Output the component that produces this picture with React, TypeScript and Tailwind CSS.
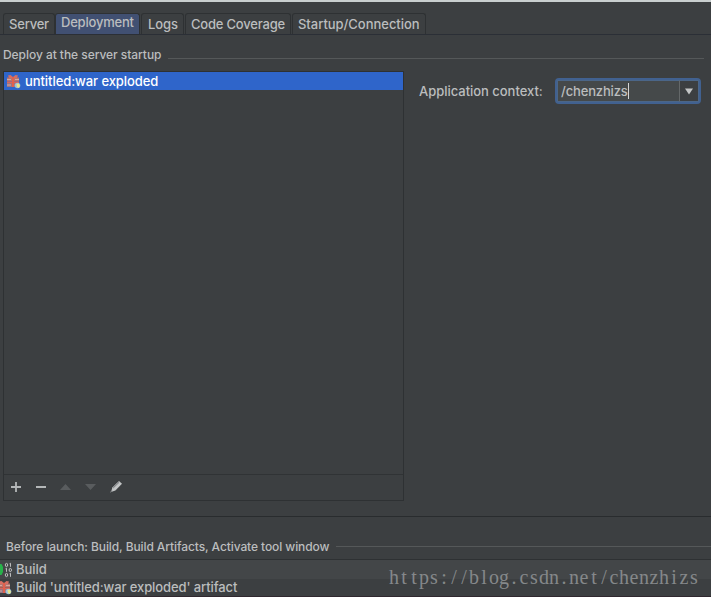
import React from "react";

function ArtifactIcon({ className = "" }: { className?: string }) {
  return (
    <svg width="15" height="15" viewBox="0 0 15 15" className={`shrink-0 ${className}`}>
      <rect x="1" y="3.500" width="5" height="4" fill="#b9756f" />
      <rect x="8" y="3.500" width="5" height="4" fill="#b9756f" />
      <rect x="1" y="9" width="5" height="4" fill="#9c7480" />
      <rect x="8" y="9" width="5" height="4" fill="#9c7480" />
      <path d="M2 1.500l2.500-0.500L7 3l2.500-2 2.500 0.500L11 4H3z" fill="#d86e62" />
      <path d="M1 8.300h12" stroke="#d9665a" strokeWidth="1.500" />
      <path d="M7 3v10" stroke="#e2604c" strokeWidth="2" />
      <path d="M1 5.500h4M9 5.500h4M1 11h4" stroke="#d3aaa2" strokeWidth="1" />
      <circle cx="11.500" cy="11.500" r="2.800" fill="#9cc0d8" />
      <path d="M10.500 10l2-0.500 1.500 2-1 2.500-2-1z" fill="#e8e488" />
    </svg>
  );
}

function BuildIcon() {
  return (
    <svg width="13" height="16" viewBox="0 0 13 16" className="shrink-0">
      <path d="M0 2h1.500L3 5v5l-1.500 3H0z" fill="#27b24a" />
      <g fill="none" stroke="#c9cbcc" strokeWidth="0.9">
        <ellipse cx="6.500" cy="3" rx="1.200" ry="1.600" />
        <path d="M9.500 1.800l1-0.500v3.500M5.500 6.800l1-0.500v3.500M9.500 11.800l1-0.500v3.500" />
        <ellipse cx="10.300" cy="8" rx="1.200" ry="1.600" />
        <ellipse cx="6.500" cy="13" rx="1.200" ry="1.600" />
      </g>
    </svg>
  );
}

function Tab({ label, className }: { label: string; className: string }) {
  return (
    <div className={`h-[21px] shrink-0 whitespace-nowrap rounded-t-[3px] border border-b-0 border-[#2e3133] text-[13px] ${className}`}>
      {label}
    </div>
  );
}

export default function App() {
  return (
    <div className="h-[597px] w-[711px] overflow-hidden bg-[#3c3f41] font-['Inter','Liberation_Sans',sans-serif] text-[13px] font-medium tracking-[-0.07px] text-[#bbbdbe]">
      <div className="h-[2px] bg-[#c9cfcf]" />
      <div className="flex h-[33px] items-start border-b border-[#2b2f36] pl-[3px] pt-[11px]">
        <Tab label="Server" className="w-[52px] pl-[5px] leading-[20px] tracking-[-0.2px]" />
        <Tab label="Deployment" className="w-[85px] bg-[#415072] pl-[5px] leading-[17px] tracking-[-0.2px]" />
        <Tab label="Logs" className="ml-px w-[43px] pl-[6px] leading-[20px]" />
        <Tab label="Code Coverage" className="ml-px w-[106px] pl-[5px] leading-[20px] tracking-[-0.2px]" />
        <Tab label="Startup/Connection" className="ml-px w-[134px] pl-[5px] leading-[20px] tracking-[-0.03px]" />
      </div>

      <div className="flex h-[36px] items-center pl-[3px] pr-[7px] pt-[3px]">
        <span className="w-[165px] whitespace-nowrap text-[12px] tracking-[-0.05px]">Deploy at the server startup</span>
        <div className="mt-[7px] h-px flex-1 bg-[#555859]" />
      </div>

      <div className="flex h-[430px] pl-[3px]">
        <div className="flex w-[401px] flex-col border border-[#2e3133]">
          <div className="flex h-[18px] items-center bg-[#2f65ca] pl-[2px] text-white">
            <ArtifactIcon />
            <span className="ml-[4px] whitespace-nowrap leading-[18px]">untitled:war exploded</span>
          </div>
          <div className="flex-1" />
          <div className="flex h-[26px] items-start border-t border-[#303335]">
            <svg width="130" height="24" viewBox="0 0 130 24">
              <path d="M7 12h10M12 7v10M32 12h10" stroke="#b4b7b8" strokeWidth="1.8" />
              <path d="M56 15l5.500-6 5.500 6zM81 9h11l-5.500 6z" fill="#595c5e" />
              <path d="M107 17l1.400-4.500L115 6l3 2.800-6.600 6.700z" fill="#c3c5c6" />
              <path d="M109.200 13l6-5.800M106 17.500l2.200-2" stroke="#747779" strokeWidth="1" />
            </svg>
          </div>
        </div>
        <div className="flex flex-1 items-start pl-[15px] pt-[6px]">
          <span className="w-[136px] whitespace-nowrap leading-[28px] tracking-[-0.03px]">Application context:</span>
          <div className="mt-px flex h-[26px] w-[146px] rounded-[4px] border-2 border-[#416190] bg-[#45494a]">
            <div className="flex h-full flex-1 items-center border border-r-0 border-[#4b6688] pl-[3px]">
              <span className="whitespace-nowrap pt-[2px] tracking-[-0.15px]">/chenzhizs</span>
              <div className="h-[16px] w-px bg-[#d5d5d5]" />
            </div>
            <div className="flex w-[20px] items-center justify-center border border-[#4b6688] border-l-[#646869] bg-[#3c3f41]">
              <svg width="8" height="7" viewBox="0 0 9 7"><path d="M0 0h9L4.500 7z" fill="#c3c5c6" /></svg>
            </div>
          </div>
        </div>
      </div>

      <div className="h-[16px] border-b border-[#292c2e]" />
      <div className="flex h-[42px] items-center pl-[6px] pt-[17px]">
        <span className="w-[330px] whitespace-nowrap text-[12px] tracking-[-0.09px]">Before launch: Build, Build Artifacts, Activate tool window</span>
        <div className="h-px flex-1 bg-[#555859]" />
      </div>
      <div className="relative h-[38px] border-y border-t-[#2e3133] border-b-[#30282f]">
        <div className="flex h-[19px] items-center bg-[#434648]">
          <BuildIcon />
          <span className="ml-[3px]">Build</span>
        </div>
        <div className="flex h-[17px] items-center overflow-hidden">
          <ArtifactIcon className="-ml-[3px]" />
          <span className="ml-[4px] whitespace-nowrap tracking-[-0.1px]">Build 'untitled:war exploded' artifact</span>
        </div>
        <div className="absolute left-[389px] top-[4px] flex font-['Liberation_Serif',serif] text-[20px] font-normal leading-[26px] tracking-normal text-[#85888a]">
          {"https://blog.csdn.net/chenzhizs".split("").map((c, i) => (
            <span key={i} className="flex w-[10px] justify-center">{c}</span>
          ))}
        </div>
      </div>
    </div>
  );
}
